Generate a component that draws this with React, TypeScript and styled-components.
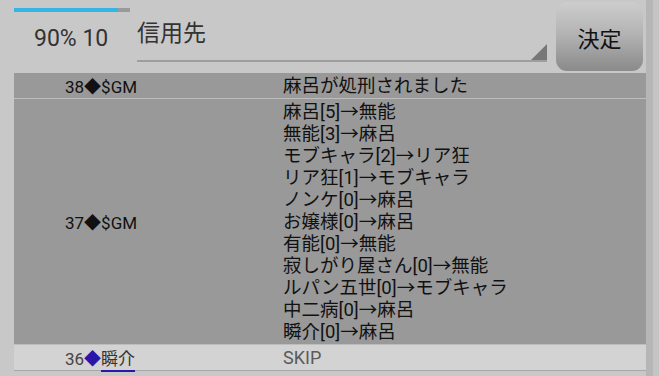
import React from "react";
import styled, { createGlobalStyle } from "styled-components";

const Global = createGlobalStyle`
  html, body { margin: 0; padding: 0; }
  body {
    width: 659px;
    height: 376px;
    overflow: hidden;
    background: #c8c8c8;
    font-family: Roboto, "Noto Sans CJK JP", sans-serif;
  }
`;

const Page = styled.div`
  width: 659px;
  height: 376px;
  display: flex;
  flex-direction: column;
  background: linear-gradient(to right, #c8c8c8 0, #c8c8c8 646px, #b6b6b6 646px, #b6b6b6 653px, #c4c4c4 653px);
`;

const Header = styled.div`
  height: 73px;
  display: flex;
  align-items: flex-start;
  padding-left: 14px;
  box-sizing: border-box;
`;

const Status = styled.div`
  width: 123px;
  display: flex;
  flex-direction: column;
  padding-top: 8px;
`;

const Progress = styled.div`
  width: 116px;
  height: 4px;
  background: #9a9a9a;
  display: flex;
`;

const ProgressFill = styled.div`
  height: 100%;
  background: #33b5e5;
`;

const StatusText = styled.div`
  margin-top: 14px;
  padding-left: 20px;
  font-size: 23px;
  line-height: 26px;
  color: #333;
`;

const Select = styled.div`
  position: relative;
  width: 410px;
  height: 62px;
  box-sizing: border-box;
  border-bottom: 2px solid #9e9e9e;
  font-size: 23px;
  line-height: 26px;
  color: #333;
  padding-top: 21px;
`;

const Arrow = styled.div`
  position: absolute;
  right: 0;
  bottom: 0;
  width: 0;
  height: 0;
  border-left: 16px solid transparent;
  border-bottom: 16px solid #777;
`;

const Button = styled.button`
  margin-left: 9px;
  margin-top: 2px;
  width: 87px;
  height: 69px;
  border: none;
  border-radius: 11px;
  background: linear-gradient(to bottom, #cdcdcd 0%, #b4b4b4 45%, #8a8a8a 100%);
  font-family: Roboto, "Noto Sans CJK JP", sans-serif;
  font-size: 22px;
  color: #111;
  padding: 0;
  display: flex;
  align-items: center;
  justify-content: center;
`;

const Table = styled.div`
  width: 632px;
  margin-left: 14px;
  display: flex;
  flex-direction: column;
  font-size: 17px;
  color: #111;
`;

const Row = styled.div<{ $light?: boolean }>`
  display: grid;
  grid-template-columns: 269px 1fr;
  align-items: center;
  background: ${(p) => (p.$light ? "#d3d3d3" : "#999999")};
  border-bottom: 1px solid ${(p) => (p.$light ? "#a8a8a8" : "#bdbdbd")};
`;

const Who = styled.div`
  padding-left: 51px;
  white-space: nowrap;
  color: #111;
`;

const Lines = styled.div<{ $h: number }>`
  display: flex;
  flex-direction: column;
  justify-content: center;
  min-height: ${(p) => p.$h}px;
  line-height: 22px;
  font-size: 18.5px;
`;

const Line = styled.div`
  white-space: nowrap;
`;

const Num = styled.span`
  color: #444;
`;

const Diamond = styled.span`
  color: #2a16a8;
`;

const Name = styled.span`
  color: #333;
  border-bottom: 2px solid #2a16a8;
  padding-bottom: 1px;
`;

const Skip = styled.div`
  color: #5a5a5a;
  font-size: 18px;
  line-height: 25px;
`;

const votes = [
  "麻呂[5]→無能",
  "無能[3]→麻呂",
  "モブキャラ[2]→リア狂",
  "リア狂[1]→モブキャラ",
  "ノンケ[0]→麻呂",
  "お嬢様[0]→麻呂",
  "有能[0]→無能",
  "寂しがり屋さん[0]→無能",
  "ルパン五世[0]→モブキャラ",
  "中二病[0]→麻呂",
  "瞬介[0]→麻呂",
];

export default function App() {
  return (
    <>
      <Global />
      <Page>
        <Header>
          <Status>
            <Progress>
              <ProgressFill style={{ width: "90%" }} />
            </Progress>
            <StatusText>90% 10</StatusText>
          </Status>
          <Select>
            信用先
            <Arrow />
          </Select>
          <Button>決定</Button>
        </Header>
        <Table>
          <Row>
            <Who>38◆$GM</Who>
            <Lines $h={25}>
              <Line>麻呂が処刑されました</Line>
            </Lines>
          </Row>
          <Row>
            <Who>37◆$GM</Who>
            <Lines $h={245}>
              {votes.map((v) => (
                <Line key={v}>{v}</Line>
              ))}
            </Lines>
          </Row>
          <Row $light>
            <Who>
              <Num>36</Num>
              <Diamond>◆</Diamond>
              <Name>瞬介</Name>
            </Who>
            <Skip>SKIP</Skip>
          </Row>
        </Table>
      </Page>
    </>
  );
}
